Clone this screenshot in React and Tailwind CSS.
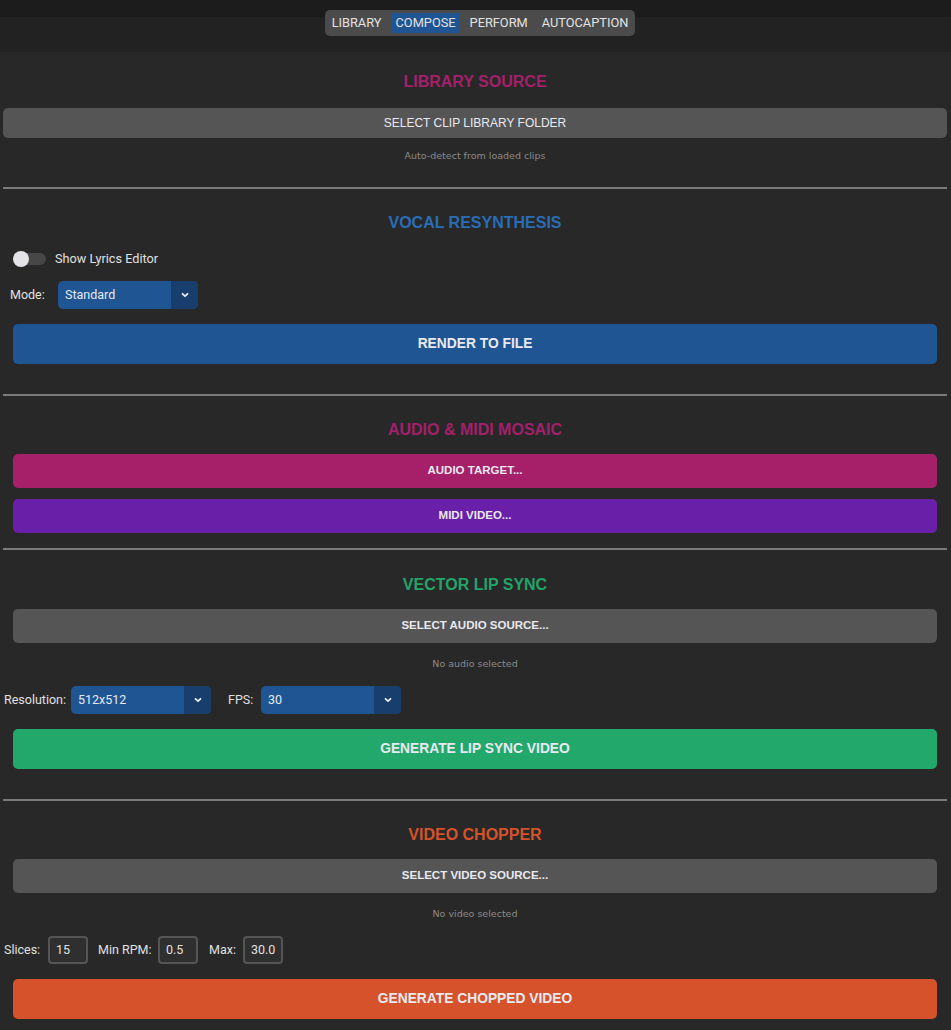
import React from "react";

const tabs = ["LIBRARY", "COMPOSE", "PERFORM", "AUTOCAPTION"];

function Chevron() {
  return (
    <svg width="10" height="10" viewBox="0 0 10 10" fill="none">
      <path d="M2.5 3.8 L5 6.2 L7.5 3.8" stroke="#e6ecf5" strokeWidth="1.8" strokeLinecap="round" strokeLinejoin="round" />
    </svg>
  );
}

function Select({ value, width }) {
  return (
    <div className={`flex h-[28px] ${width} rounded-[5px] overflow-hidden bg-[#1f5592]`}>
      <div className="flex-1 flex items-center pl-[7px] text-[12.5px] text-[#e4e9f2]">{value}</div>
      <div className="w-[27px] flex items-center justify-center bg-[#173e6c]">
        <Chevron />
      </div>
    </div>
  );
}

function Title({ color, children, mt }) {
  return (
    <div className={`${mt} h-[18px] flex items-center justify-center text-[16px] font-bold leading-none ${color} [font-family:'Liberation_Sans',Arial,sans-serif]`}>
      {children}
    </div>
  );
}

function Btn({ bg, h, children, mt, bold, text = "text-[11.5px]" }) {
  return (
    <div className={`${mt} ${h} ${bg} rounded-[5px] flex items-center justify-center ${text} ${bold ? "font-bold" : ""} text-[#e9e9f0] [font-family:'Liberation_Sans',Arial,sans-serif]`}>
      {children}
    </div>
  );
}

function Note({ mt, children }) {
  return (
    <div className={`${mt} h-[12px] flex items-center justify-center text-[9.5px] text-[#8a8a8a] [font-family:'DejaVu_Sans',Verdana,sans-serif]`}>
      {children}
    </div>
  );
}

function Divider({ mt }) {
  return <div className={`${mt} h-[2px] bg-[#7a7a7a]`} />;
}

function NumInput({ value, width }) {
  return (
    <div className={`h-[28px] ${width} rounded-[4px] border-2 border-[#555] bg-[#2f2f2f] flex items-center pl-[6px] text-[12.5px] text-[#e0e0e0]`}>
      {value}
    </div>
  );
}

export default function App() {
  return (
    <div className="min-h-[1030px] bg-[#282828] [font-family:Roboto,'Liberation_Sans',sans-serif]">
      <div className="h-[52px] bg-[linear-gradient(to_bottom,#1c1c1c_17px,#222222_17px)] flex justify-center pt-[10px] pl-[9px]">
        <div className="h-[26px] rounded-[5px] bg-[#4b4b4b] flex items-center px-[3px] gap-[6px]">
          {tabs.map((t) => (
            <div
              key={t}
              className={`h-[20px] px-[4px] flex items-center text-[12.8px] text-[#e2e2e2] ${
                t === "COMPOSE" ? "bg-[#1f5592]" : ""
              }`}
            >
              {t}
            </div>
          ))}
        </div>
      </div>

      <div className="px-[3px] pr-[4px]">
        {/* library source */}
        <Title color="text-[#a3206a]" mt="mt-[21px]">LIBRARY SOURCE</Title>
        <Btn bg="bg-[#555555]" h="h-[30px]" mt="mt-[17px]" text="text-[12px]">SELECT CLIP LIBRARY FOLDER</Btn>
        <Note mt="mt-[12px]">Auto-detect from loaded clips</Note>
        <Divider mt="mt-[25px]" />

        {/* vocal resynthesis */}
        <Title color="text-[#2a6db5]" mt="mt-[25px]">VOCAL RESYNTHESIS</Title>
        <div className="mt-[19px] h-[16px] flex items-center pl-[10px]">
          <div className="relative w-[33px] h-[12px] rounded-full bg-[#474747]">
            <div className="absolute left-0 top-[-2px] w-[16px] h-[16px] rounded-full bg-[#e4e4e8]" />
          </div>
          <span className="ml-[9px] text-[12.7px] text-[#e0e0e0]">Show Lyrics Editor</span>
        </div>
        <div className="mt-[14px] flex items-center pl-[7px]">
          <span className="text-[12.5px] text-[#e0e0e0] w-[48px]">Mode:</span>
          <Select value="Standard" width="w-[140px]" />
        </div>
        <div className="px-[10px]">
          <Btn bg="bg-[#1f5592]" h="h-[40px]" mt="mt-[15px]" bold text="text-[13.8px]">RENDER TO FILE</Btn>
        </div>
        <Divider mt="mt-[30px]" />

        {/* audio & midi mosaic */}
        <Title color="text-[#a3206a]" mt="mt-[25px]">AUDIO &amp; MIDI MOSAIC</Title>
        <div className="px-[10px]">
          <Btn bg="bg-[#a51f69]" h="h-[34px]" mt="mt-[15px]" bold>AUDIO TARGET...</Btn>
          <Btn bg="bg-[#6a1fa8]" h="h-[34px]" mt="mt-[11px]" bold>MIDI VIDEO...</Btn>
        </div>
        <Divider mt="mt-[15px]" />

        {/* vector lip sync */}
        <Title color="text-[#23a36a]" mt="mt-[26px]">VECTOR LIP SYNC</Title>
        <div className="px-[10px]">
          <Btn bg="bg-[#555555]" h="h-[34px]" mt="mt-[15px]" bold>SELECT AUDIO SOURCE...</Btn>
        </div>
        <Note mt="mt-[15px]">No audio selected</Note>
        <div className="mt-[16px] flex items-center pl-[1px]">
          <span className="text-[12.5px] text-[#e0e0e0] w-[67px]">Resolution:</span>
          <Select value="512x512" width="w-[140px]" />
          <span className="ml-[17px] w-[33px] text-[12.5px] text-[#e0e0e0]">FPS:</span>
          <Select value="30" width="w-[140px]" />
        </div>
        <div className="px-[10px]">
          <Btn bg="bg-[#22a86b]" h="h-[40px]" mt="mt-[15px]" bold text="text-[13.8px]">GENERATE LIP SYNC VIDEO</Btn>
        </div>
        <Divider mt="mt-[30px]" />

        {/* video chopper */}
        <Title color="text-[#d4532b]" mt="mt-[25px]">VIDEO CHOPPER</Title>
        <div className="px-[10px]">
          <Btn bg="bg-[#555555]" h="h-[34px]" mt="mt-[15px]" bold>SELECT VIDEO SOURCE...</Btn>
        </div>
        <Note mt="mt-[15px]">No video selected</Note>
        <div className="mt-[16px] flex items-center pl-[1px] text-[12.5px] text-[#e0e0e0]">
          <span className="w-[44px]">Slices:</span>
          <NumInput value="15" width="w-[40px]" />
          <span className="ml-[10px] w-[60px]">Min RPM:</span>
          <NumInput value="0.5" width="w-[40px]" />
          <span className="ml-[11px] w-[34px]">Max:</span>
          <NumInput value="30.0" width="w-[40px]" />
        </div>
        <div className="px-[10px]">
          <Btn bg="bg-[#d5522a]" h="h-[40px]" mt="mt-[15px]" bold text="text-[13.8px]">GENERATE CHOPPED VIDEO</Btn>
        </div>
        <div className="h-[11px]" />
      </div>
    </div>
  );
}
